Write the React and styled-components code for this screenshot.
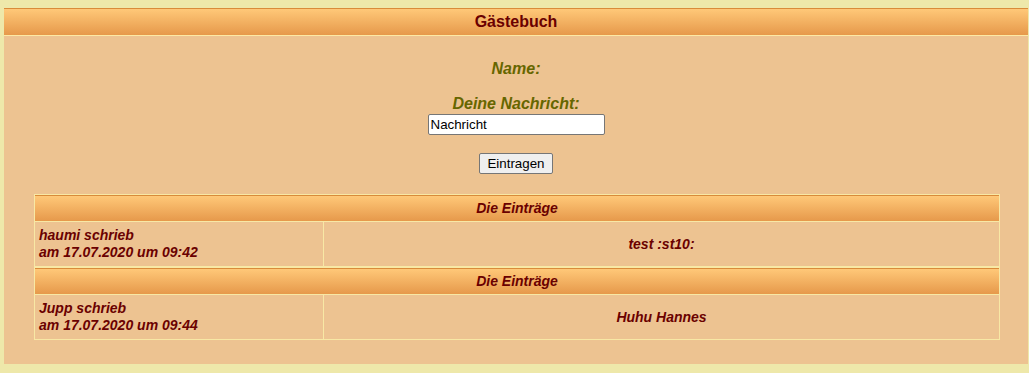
import React from "react";
import styled, { createGlobalStyle } from "styled-components";

const GlobalStyle = createGlobalStyle`
  html, body {
    margin: 0;
    padding: 0;
    background: #eee8aa;
    font-family: "Liberation Sans", Arial, sans-serif;
  }
`;

const Page = styled.div`
  padding: 8px 1px 9px 4px;
`;

const Panel = styled.div`
  background: #edc391;
  height: 356px;
  box-sizing: border-box;
`;

const TitleBar = styled.div`
  border-top: 1px solid #d98b3b;
  border-bottom: 1px solid #fde9a5;
  height: 26px;
  line-height: 26px;
  background: linear-gradient(to bottom, #ffc878, #e6994b);
  text-align: center;
  font-size: 16px;
  font-weight: bold;
  color: #6a0000;
`;

const Form = styled.form`
  display: flex;
  flex-direction: column;
  align-items: center;
  padding-top: 23px;
  margin: 0;
`;

const Label = styled.div`
  font-size: 16px;
  line-height: 19px;
  font-weight: bold;
  font-style: italic;
  color: #666600;
  margin-top: ${({ $gap }) => $gap || 0}px;
`;

const TextInput = styled.input`
  box-sizing: border-box;
  width: 177px;
  height: 21px;
  margin-top: 1px;
  padding: 1px 2px;
  border: 1px solid #767676;
  border-radius: 2px;
  background: #fff;
  font-family: "Liberation Sans", Arial, sans-serif;
  font-size: 13.33px;
  color: #000;
  outline: none;
`;

const Button = styled.button`
  box-sizing: border-box;
  width: 74px;
  height: 21px;
  margin-top: 18px;
  padding: 0;
  border: 1px solid #767676;
  border-radius: 2px;
  background: #efefef;
  font-family: "Liberation Sans", Arial, sans-serif;
  font-size: 13.33px;
  color: #000;
`;

const Entries = styled.div`
  margin: 20px 28px 0 30px;
`;

const Entry = styled.div`
  border: 1px solid #f8e8a5;
`;

const EntryHead = styled.div`
  border-top: 1px solid #d98b3b;
  border-bottom: 1px solid #f8e8a5;
  height: 25px;
  line-height: 25px;
  background: linear-gradient(to bottom, #ffc878, #e6994b);
  text-align: center;
  font-size: 14px;
  font-weight: bold;
  font-style: italic;
  color: #6a0000;
`;

const EntryRow = styled.div`
  display: grid;
  grid-template-columns: 289px 1fr;
  height: 44px;
`;

const Cell = styled.div`
  box-sizing: border-box;
  padding: 5px 4px;
  font-size: 14px;
  line-height: 17px;
  font-weight: bold;
  font-style: italic;
  color: #6a0000;
  ${({ $center }) =>
    $center
      ? `display: flex; align-items: center; justify-content: center;`
      : `border-right: 1px solid #f8e8a5;`}
`;

const entries = [
  { name: "haumi", date: "17.07.2020", time: "09:42", text: "test :st10:" },
  { name: "Jupp", date: "17.07.2020", time: "09:44", text: "Huhu Hannes" },
];

export default function App() {
  return (
    <Page>
      <GlobalStyle />
      <Panel>
        <TitleBar>Gästebuch</TitleBar>
        <Form onSubmit={(e) => e.preventDefault()}>
          <Label>Name:</Label>
          <Label $gap={16}>Deine Nachricht:</Label>
          <TextInput type="text" defaultValue="Nachricht" />
          <Button type="submit">Eintragen</Button>
        </Form>
        <Entries>
          {entries.map((e, i) => (
            <Entry key={i}>
              <EntryHead>Die Einträge</EntryHead>
              <EntryRow>
                <Cell>
                  {e.name} schrieb
                  <br />
                  am {e.date} um {e.time}
                </Cell>
                <Cell $center>{e.text}</Cell>
              </EntryRow>
            </Entry>
          ))}
        </Entries>
      </Panel>
    </Page>
  );
}
